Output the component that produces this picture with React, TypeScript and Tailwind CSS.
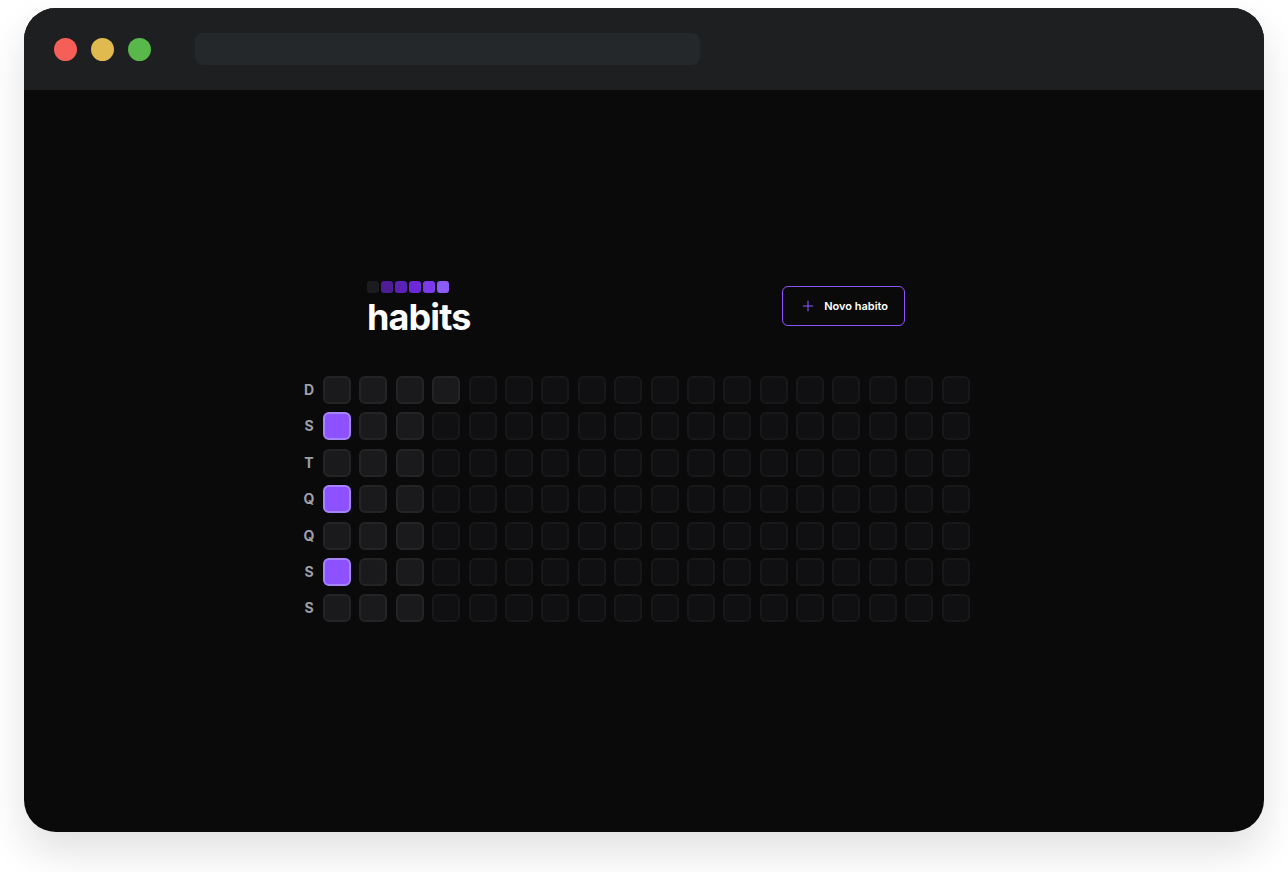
import { Plus } from "lucide-react";

const weekDays = ["D", "S", "T", "Q", "Q", "S", "S"];

// 0 = futuro, 1 = dia passado, 2 = completo
type DayState = 0 | 1 | 2;

const COLUMNS = 18;

function buildGrid(): DayState[][] {
  const rows: DayState[][] = [];
  for (let r = 0; r < 7; r++) {
    const row: DayState[] = [];
    for (let c = 0; c < COLUMNS; c++) {
      let state: DayState = 0;
      if (c < 3) state = 1;
      if (c === 3 && r === 0) state = 1;
      if (c === 0 && (r === 1 || r === 3 || r === 5)) state = 2;
      row.push(state);
    }
    rows.push(row);
  }
  return rows;
}

function LogoMark() {
  const colors = ["bg-[#1c1c1f]", "bg-[#4c1d95]", "bg-[#5b21b6]", "bg-[#6d28d9]", "bg-[#7c3aed]", "bg-[#8b5cf6]"];
  return (
    <div className="flex gap-[2px]">
      {colors.map((color, i) => (
        <div key={i} className={`h-3 w-3 rounded-[3px] ${color}`} />
      ))}
    </div>
  );
}

function DaySquare({ state }: { state: DayState }) {
  const styles =
    state === 2
      ? "bg-violet-500 border-violet-400"
      : state === 1
      ? "bg-[#1a1a1c] border-[#242427]"
      : "bg-[#101012] border-[#18181a]";
  return <div className={`h-7 w-7 rounded-md border-2 ${styles}`} />;
}

export default function App() {
  const grid = buildGrid();

  return (
    <div className="min-h-[872px] w-full bg-white pt-2 pl-6" style={{ fontFamily: "Inter, 'Liberation Sans', sans-serif" }}>
      <div className="flex h-[824px] w-[1240px] flex-col overflow-hidden rounded-[32px] bg-[#0a0a0a] shadow-[0_20px_40px_rgba(0,0,0,0.12)]">
        <div className="flex h-[82px] shrink-0 items-center bg-[#1e1f21] pl-[30px]">
          <div className="flex gap-[14px]">
            <div className="h-[23px] w-[23px] rounded-full bg-[#f65f57]" />
            <div className="h-[23px] w-[23px] rounded-full bg-[#e0b94f]" />
            <div className="h-[23px] w-[23px] rounded-full bg-[#58b84a]" />
          </div>
          <div className="ml-[44px] h-8 w-[505px] rounded-lg bg-[#25282b]" />
        </div>

        <div className="flex flex-1 flex-col">
          <div className="ml-[343px] mt-[191px] flex w-[538px] items-start justify-between">
            <div className="flex flex-col gap-[6px]">
              <LogoMark />
              <h1 className="text-4xl font-bold leading-none tracking-tight text-white">habits</h1>
            </div>
            <button className="mt-[5px] flex h-10 items-center gap-2 rounded-md border border-violet-500 pl-[17px] pr-[16px] text-[11px] font-semibold text-white">
              <Plus className="h-4 w-4 text-violet-500" strokeWidth={1.6} />
              Novo habito
            </button>
          </div>

          <div className="ml-[277px] mt-[41px] flex gap-[6px]">
            <div className="flex w-4 flex-col gap-[8.4px]">
              {weekDays.map((day, i) => (
                <div key={i} className="flex h-7 items-center justify-center text-sm font-bold text-zinc-400">
                  {day}
                </div>
              ))}
            </div>
            <div className="flex flex-col gap-[8.4px]">
              {grid.map((row, r) => (
                <div key={r} className="flex gap-[8.4px]">
                  {row.map((state, c) => (
                    <DaySquare key={c} state={state} />
                  ))}
                </div>
              ))}
            </div>
          </div>
        </div>
      </div>
    </div>
  );
}
